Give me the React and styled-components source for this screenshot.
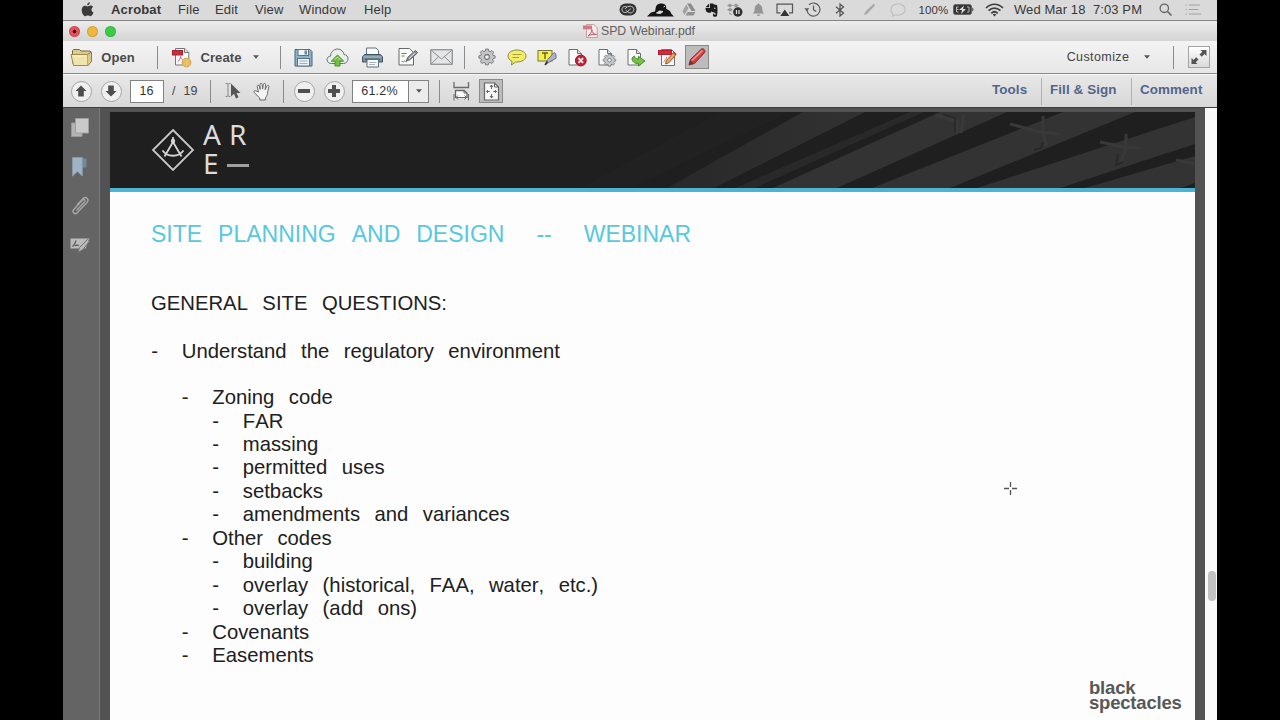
import React from 'react';
import styled, { createGlobalStyle, css } from 'styled-components';

const GlobalStyle = createGlobalStyle`
  * {
    box-sizing: border-box;
  }

  body {
    margin: 0;
    background: #000;
    font-family: 'Liberation Sans', Arial, sans-serif;
    overflow: hidden;
  }

  svg {
    display: block;
    flex: none;
    overflow: visible;
  }
`;

const menus = ['File', 'Edit', 'View', 'Window', 'Help'];

const outline = [
  { level: 0, text: 'Understand the regulatory environment', after: 22.8 },
  { level: 1, text: 'Zoning code' },
  { level: 2, text: 'FAR' },
  { level: 2, text: 'massing' },
  { level: 2, text: 'permitted uses' },
  { level: 2, text: 'setbacks' },
  { level: 2, text: 'amendments and variances' },
  { level: 1, text: 'Other codes' },
  { level: 2, text: 'building' },
  { level: 2, text: 'overlay (historical, FAA, water, etc.)' },
  { level: 2, text: 'overlay (add ons)' },
  { level: 1, text: 'Covenants' },
  { level: 1, text: 'Easements' },
];

const Icon = ({ w = 20, h = 20, children }) => (
  <svg width={w} height={h} viewBox={`0 0 ${w} ${h}`} fill="none">{children}</svg>
);

/* ---------- menu bar icons ---------- */

const AppleIcon = () => (
  <Icon w={13} h={15}>
    <path d="M8.8.3c.1 1.7-1.2 3-2.7 3C6 1.8 7.3.4 8.8.3zM6.5 4.4c.7 0 1.6-.8 3-.8 1 0 2 .5 2.6 1.4-2.3 1.4-1.9 4.6.4 5.5-.6 1.6-1.8 3.7-3.1 3.7-.9 0-1.3-.6-2.6-.6s-1.7.6-2.6.6C2.500 14.200.7 11 .7 8.100c0-2.900 1.700-4.400 3.300-4.400 1.100 0 1.900.7 2.500.7z" fill="#3a3a3a" />
  </Icon>
);

const CloudCreativeIcon = () => (
  <Icon w={18} h={13}>
    <rect x="0.5" y="0.5" width="17" height="12" rx="6" fill="#333" />
    <path d="M8 4.300C5.500 2.500 3 4 3 6.500S5.500 10.300 8 9l3.800-3.300M6 6c2.500-4 8.800-3.500 8.800.5 0 3-3.500 4.500-6 2.500L7 7.200" stroke="#ccc" strokeWidth="1" />
  </Icon>
);

const SkyIcon = () => (
  <Icon w={27} h={14}>
    <path d="M0 13.500 4 9.500l4-1 1-5C10 1 13 0 16 .8c3 .7 3.500 3 3.200 5L23 8l1.500 3 2.500 2.500z" fill="#151515" />
    <path d="M9.500 10 12.500 8l3.500.5-2.500 2zM16.500 4l1.500-.7" stroke="#ddd" fill="#ddd" />
  </Icon>
);

const DriveIcon = () => (
  <Icon w={14} h={13}>
    <path d="M5 .5h4L13.500 8h-4z" fill="#8c8c8c" />
    <path d="M4.300 1.500.5 8.200l2 3.800 4-7z" fill="#a1a1a1" />
    <path d="M5.500 9h8l-2 3.500H3.500z" fill="#929292" />
  </Icon>
);

const EvernoteIcon = () => (
  <Icon w={13} h={14}>
    <path d="M.5 4.200 4.200.500V4.200zM5 .5h3l1 1 3 .4c.7 3 .7 7 0 11-.4 1-3.700 1-4 0-.2-1.600 0-2.400 1.300-2.400v1.200h1.300c.2-1.200-.3-2.200-1.600-2.300C7.500 9.300 7 8.700 6.700 8c-.3 1.500-1.200 2-2.700 1.800C1 9.500.5 7 .5 5H5z" fill="#1d1d1d" />
    <circle cx="9.800" cy="5.300" r="0.800" fill="#ccc" />
  </Icon>
);

const DropboxIcon = () => (
  <Icon w={17} h={14}>
    <path d="m4 .5 3 2-3 2-3-2zM10 .5l3 2-3 2-3-2zM4 4.800l3 2-3 2-3-2zM3 9.500l3 1.500v1L3 11z" fill="#999" />
    <circle cx="11.800" cy="9" r="4.700" fill="#2e2e2e" />
    <path d="M10.500 7v4M13 7v4" stroke="#ddd" strokeWidth="1.300" />
  </Icon>
);

const BellIcon = () => (
  <Icon w={13} h={14}>
    <path d="M6.500.5c.8 0 1 .5 1 1C9.500 2 10.300 4 10.300 6c0 2.500.8 3.600 2.200 4.500H.5C1.900 9.600 2.700 8.500 2.700 6c0-2 .8-4 2.800-4.500 0-.5.200-1 1-1zM5 11.500h3c0 2-3 2-3 0z" fill="#949494" />
  </Icon>
);

const AirplayIcon = () => (
  <Icon w={18} h={14}>
    <path d="M4.500 9.800H1V1.200h15.500v8.600H13" stroke="#555" strokeWidth="1.200" />
    <path d="M8.800 6.500 13.300 13H4.300z" fill="#333" />
  </Icon>
);

const TimeMachineIcon = () => (
  <Icon w={17} h={15}>
    <path d="M3 8A6.500 6.500 0 1 0 5 2.800" stroke="#5c5c5c" strokeWidth="1.200" />
    <path d="M.3 6.300h5L2.800 9.300z" fill="#5c5c5c" />
    <path d="M9.500 3.500v4.300l2.800 1.700" stroke="#5c5c5c" strokeWidth="1.200" />
  </Icon>
);

const BluetoothIcon = () => (
  <Icon w={10} h={14}>
    <path d="m1 3.800 7.500 6.200L5 13V1l3.500 3L1 10.200" stroke="#505050" strokeWidth="1.200" />
  </Icon>
);

const FadedPenIcon = () => (
  <Icon w={13} h={13}>
    <path d="m1 12 1-3L10.500.8l1.700 1.500L4 11z" fill="#a9a9a9" />
  </Icon>
);

const FadedBubbleIcon = () => (
  <Icon w={16} h={14}>
    <path d="M8 .8c4 0 7.200 2.500 7.200 5.700S12 12.200 8 12.200c-1 0-2-.1-2.700-.4L2.500 13l.3-2.500C1.500 9.500.8 8.100.8 6.500.800 3.300 4 .8 8 .8z" stroke="#bdbdbd" strokeWidth="1.100" />
  </Icon>
);

const BatteryIcon = () => (
  <Icon w={21} h={11}>
    <rect x="0.700" y="0.700" width="17.600" height="9.600" rx="1.500" fill="#333" stroke="#555" />
    <path d="M19.300 3.500c1.500.500 1.500 3.500 0 4z" fill="#333" />
    <path d="M5.500 3h-2v5h2M3.500 5.500h2M14 3h2v5h-2" stroke="#bbb" strokeWidth="1" />
    <path d="M11 1.500 6 6h3l-1 4L13 5h-3z" fill="#ddd" />
  </Icon>
);

const WifiIcon = () => (
  <Icon w={19} h={14}>
    <path d="M1 5c5-5 12-5 17 0M3.600 7.700c3.500-3.500 8.300-3.500 11.800 0M6.300 10.300c2-2 4.400-2 6.400 0" stroke="#3f3f3f" strokeWidth="1.700" />
    <path d="m7.700 11.600 1.800 2 1.800-2c-1-1-2.600-1-3.600 0z" fill="#3f3f3f" />
  </Icon>
);

const SearchIcon = () => (
  <Icon w={13} h={13}>
    <circle cx="5.300" cy="5.300" r="4.200" stroke="#666" strokeWidth="1.300" />
    <path d="m8.500 8.500 4 4" stroke="#666" strokeWidth="1.700" />
  </Icon>
);

const ListIcon = () => (
  <Icon w={17} h={11}>
    <path d="M3.800 1h11M3.800 5.500h9.500M3.800 10h12.500M.5 1h1.300M.5 5.500h1.300M.5 10h1.300" stroke="#a2a2a2" strokeWidth="1.200" />
  </Icon>
);

/* ---------- toolbar icons ---------- */

const PdfMark = () => (
  <Icon w={15} h={14}>
    <path d="M3.500.5h7.300l3.500 3.300v9.700H3.500z" fill="#f5e9e9" stroke="#c4a1a1" />
    <rect x="0" y="1.500" width="9" height="3.800" fill="#cf7886" />
    <path d="M5 12c2-1.500 3.800-4 3.800-6.500.3 3 2 5 4.700 5-3-.5-6 0-8.500 1.500z" stroke="#b95866" strokeWidth="1" />
  </Icon>
);

const FolderIcon = () => (
  <Icon w={23} h={19}>
    <path d="M2.500 15V2.500l1-1h6l1.500 1.500h9l1 1V13l-3 3z" fill="#dccb8e" stroke="#796b40" />
    <path d="M1 6.500h16.500l.5 11H3.500z" fill="#f0e3ad" stroke="#a18a4a" strokeLinejoin="round" />
    <path d="m17.500 6.500 4-2.500v9.500l-3.500 4" fill="#dcc88a" stroke="#8f7b43" />
    <path d="M3 8h13" stroke="#fdf5ca" />
  </Icon>
);

const CreateIcon = () => (
  <Icon w={20} h={21}>
    <path d="M3.500 1.500h9.300l4 4V18H3.500z" fill="#fafafa" stroke="#777" />
    <path d="M12.500 1.500v4h4" fill="#ddd" stroke="#777" />
    <rect x="0.500" y="3.500" width="10" height="4.500" fill="#c92e3d" stroke="#a92232" />
    <path d="M5.500 15c2-1.500 3-4 3-5.500.500 2 1.500 3 3 3.500" stroke="#cc6570" />
    <circle cx="14.500" cy="15.500" r="4.400" fill="#e6b95d" stroke="#d3a34a" />
    <path d="m11 13 7 5M18 13l-7 5M14.500 11v9" stroke="#edcc84" strokeWidth="0.700" />
  </Icon>
);

const SaveIcon = () => (
  <Icon w={19} h={19}>
    <path d="M1 1.500h15l2 2V18H1z" fill="#8fb1c8" stroke="#4a6778" strokeLinejoin="round" />
    <rect x="4" y="1.500" width="10.500" height="6" fill="#f2f5f7" stroke="#587487" />
    <rect x="10.500" y="2.500" width="2.500" height="4" fill="#6688a0" />
    <rect x="3.500" y="10.500" width="12" height="7.500" fill="#edf2f5" stroke="#587487" />
    <path d="M5.500 13h8M5.500 15.500h8" stroke="#9ab0be" />
  </Icon>
);

const CloudUpIcon = () => (
  <Icon w={23} h={19}>
    <path d="M5.500 15.500C2.500 15.500 1 13.700 1 11.700c0-2.200 1.700-3.500 3.500-3.500C4.500 4.500 7.500 1 11.500 1c3.500 0 6 2.300 6.500 5.500 2.500.2 4 2 4 4.300 0 2.700-2 4.700-4.500 4.700z" fill="#eaeeec" stroke="#65756c" />
    <path d="m11.500 7 6.200 6.200H14V18H9v-4.800H5.300z" fill="#75c044" stroke="#4b8f29" strokeLinejoin="round" />
    <path d="m8.500 12 3-3 3 3" stroke="#c0e69c" />
  </Icon>
);

const PrintIcon = () => (
  <Icon w={21} h={21}>
    <path d="M4.500 9V1h9.500l2.500 2.500V9" fill="#fafafa" stroke="#60717b" />
    <path d="M2.500 7.500h16l2 2.500v5h-20v-5z" fill="#7891a3" stroke="#3e515e" />
    <path d="M1.500 10h18" stroke="#b0c4d2" />
    <path d="M3.500 12.500h14" stroke="#29343c" strokeWidth="1.500" />
    <path d="M5 12.500h11.500V20H5z" fill="#f7f9fa" stroke="#60717b" />
    <path d="M7 15.500h7.500M7 17.500h6" stroke="#a7b4bd" />
  </Icon>
);

const SignIcon = () => (
  <Icon w={20} h={20}>
    <path d="M1 1.500h10.500l4 4V18H1z" fill="#fafafa" stroke="#686868" />
    <path d="M3.500 6.500h5M3.500 9h3M3.500 15c1-2 1.500 1 2.500-.5s1.500.7 3 .3" stroke="#777" />
    <path d="m8.500 14 1-3.500 8-7 2 2.300-7.700 7z" fill="#8d949a" stroke="#5b6267" />
    <path d="m11 11.500 6-5.500" stroke="#e2e2e2" />
  </Icon>
);

const MailIcon = () => (
  <Icon w={23} h={16}>
    <rect x="0.800" y="0.800" width="21.400" height="14.400" fill="#e4e5e6" stroke="#747678" />
    <path d="m1.500 1.500 10 8.500 10-8.500M1.500 14.500l7-6.800M21.500 14.500l-7-6.800" stroke="#8a8c8e" />
  </Icon>
);

const GearShape = ({ cx, cy, s = 1 }) => (
  <g transform={`translate(${cx} ${cy}) scale(${s})`}>
    <path
      d="M-1.500-8h3l.5 2.200 1.500.7 2-1.300 2.100 2.100-1.300 2 .7 1.500 2.200.5v2.600l-2.200.5-.7 1.500 1.300 2-2.100 2.100-2-1.300-1.500.7-.5 2.200h-3l-.5-2.200-1.500-.7-2 1.300-2.100-2.100 1.300-2-.7-1.500-2.200-.5v-2.600l2.200-.5.7-1.500-1.300-2 2.100-2.100 2 1.300 1.500-.7z"
      fill="#c3c6c8"
      stroke="#6a6f73"
    />
    <circle cy="1" r="2.700" fill="#f1f1f1" stroke="#6a6f73" strokeWidth="1.200" />
  </g>
);

const GearIcon = () => (
  <Icon w={18} h={18}><GearShape cx={9} cy={8.100} s={0.880} /></Icon>
);

const CommentIcon = () => (
  <Icon w={20} h={17}>
    <path d="M10 1c5 0 9 2.500 9 6s-4 6-9 6l-1.300-.1L4.500 16l.5-3.800C2.500 11 1 9.300 1 7c0-3.500 4-6 9-6z" fill="#f3ee66" stroke="#8b8842" />
    <path d="M5.500 5.500h9M5.500 8.500h6.500" stroke="#a6a24a" />
  </Icon>
);

const HighlightIcon = () => (
  <Icon w={20} h={17}>
    <rect x="1" y="1.500" width="14" height="10.500" fill="#f6f04f" stroke="#777442" />
    <path d="M5 4h6M8 4v6" stroke="#67641c" strokeWidth="1.400" />
    <path d="m8.500 15.500 1.500-4L17 3.500l2 1.800v4L12.500 13z" fill="#aeb4c4" stroke="#6a7081" />
    <path d="m8 16 2.500-3.500" stroke="#333" strokeWidth="1.500" />
  </Icon>
);

const Page = () => (
  <>
    <path d="M1 1.500h8.500l4 4V17H1z" fill="#fafafa" stroke="#6c7074" />
    <path d="M9.500 1.500v4h4" fill="#ddd" stroke="#6c7074" />
  </>
);

const PageDeleteIcon = () => (
  <Icon w={19} h={19}>
    <Page />
    <circle cx="12.800" cy="12.500" r="5.400" fill="#c72134" stroke="#9d1428" />
    <path d="m10.500 10.200 4.600 4.600M15.100 10.200l-4.600 4.600" stroke="#fff" strokeWidth="1.700" />
  </Icon>
);

const PageGearIcon = () => (
  <Icon w={19} h={19}>
    <Page />
    <GearShape cx={11.500} cy={11.500} s={0.680} />
  </Icon>
);

const PageExportIcon = () => (
  <Icon w={20} h={19}>
    <Page />
    <path d="M5 10c0 4 2.500 5.500 6.500 5.500V18l6.500-5-6.500-4.700V11C9 11 7.500 10 7.500 8z" fill="#78bf48" stroke="#478b29" strokeLinejoin="round" />
  </Icon>
);

const PdfEditIcon = () => (
  <Icon w={19} h={19}>
    <path d="M3.500 1.500h10l3 3V17.500h-13z" fill="#fafafa" stroke="#727272" />
    <rect x="0.500" y="2.500" width="13" height="4" fill="#d12d3a" stroke="#b62032" />
    <path d="M5.500 14c1.500-1 3-3 3-5" stroke="#cc6570" />
    <path d="m7.500 16 1-3.500 7-8 2.500 2-6.800 8z" fill="#eaa65d" stroke="#8e5c34" />
    <path d="m15.500 4.500 2.500 2" stroke="#cc3a3f" strokeWidth="1.800" />
  </Icon>
);

const RedPencilIcon = () => (
  <Icon w={20} h={20}>
    <path d="m2 18 1.500-5.500L14.500 2c1.500-1 4.500 1.200 3.200 3.400L7.500 16.500z" fill="#d93d3d" stroke="#8d2930" />
    <path d="M5 13.500 15.500 3.500" stroke="#f19b95" strokeWidth="1.500" />
    <path d="m2 18 1.300-4.500 3.200 2.800z" fill="#693338" />
  </Icon>
);

const ExpandIcon = () => (
  <Icon w={16} h={16}>
    <path d="M9.500 1h6v6l-2-2-2.700 2.700L8.500 5.500 11.300 2.800zM6.500 15h-6V9l2 2 2.700-2.700 2.300 2.200-2.800 2.700z" fill="#555" />
  </Icon>
);

const Caret = () => (
  <Icon w={6} h={4}><path d="M0 .3h6L3 3.800z" fill="#555" /></Icon>
);

const ArrowShape = ({ down }) => (
  <Icon w={12} h={12}>
    <path d="M6 .5 11.500 6H8.800v5.500H3.200V6H.5z" fill="#4e4e4e" transform={down ? 'rotate(180 6 6)' : undefined} />
  </Icon>
);

const SelectIcon = () => (
  <Icon w={17} h={18}>
    <path d="M.5 1.500h1.800l.7.800.7-.8h1.800M3 2v12M.5 14.500h1.800l.7-.8.7.8h1.800" stroke="#888" />
    <path d="M6 1.500v13l3-2.700 2 4.700 2.500-1.200-2-4.400h4z" fill="#555" />
  </Icon>
);

const HandIcon = () => (
  <Icon w={18} h={19}>
    <path
      d="M5.500 10 4.300 4.700c-.4-1.700 1.500-2.200 2-.6l.9 3.300L7 2.600C7 .9 9 .9 9.200 2.500l.4 4.600.8-4.700c.3-1.600 2.200-1.300 2.100.3l-.3 5 1.700-3.600c.7-1.400 2.400-.7 2 .8-.8 3-1.200 4.500-1.400 6.400-.2 2-1 3.200-2 4.500V18H6.800v-2c-2-1.500-3.200-3.700-5.500-5.300-1.200-1 0-2.600 1.500-1.900z"
      fill="#f4f4f4"
      stroke="#6b6b6b"
      strokeLinejoin="round"
    />
  </Icon>
);

const FitWidthIcon = () => (
  <Icon w={17} h={19}>
    <path d="M1 0v5.500h14.500V0" stroke="#6a6a6a" strokeWidth="1.300" />
    <path d="M2.500 16V8.500h8.500l3 2.500v5" fill="#fafafa" stroke="#666" strokeWidth="1.300" />
    <path d="M11 8.500V11h3M1 12v6.500M15.500 12v6.500M3 15.500h10.500M5 13.500l-2 2 2 2M11.500 13.500l2 2-2 2" stroke="#666" />
  </Icon>
);

const FitPageIcon = () => (
  <Icon w={17} h={19}>
    <path d="M1.500 1h10L15.500 5v13h-14z" fill="#f7f7f7" stroke="#666" strokeWidth="1.200" />
    <path d="M11.500 1v4h4" stroke="#666" />
    <path d="M8.500 3v4M8.500 12v4M3.500 9.500h3.300M10.300 9.500h3.300M7 5l1.500-2L10 5M7 14l1.500 2 1.500-2M5 8 3.500 9.500 5 11M12 8l1.500 1.500L12 11" stroke="#666" />
  </Icon>
);

/* ---------- side panel icons ---------- */

const PagesIcon = () => (
  <Icon w={18} h={19}>
    <path d="M.5 5H11v13.500H.5z" fill="#b4b4b4" stroke="#999" />
    <path d="M4.500.5h13v14.500h-13z" fill="#cacaca" stroke="#a0a0a0" />
  </Icon>
);

const BookmarkIcon = () => (
  <Icon w={15} h={20}>
    <path d="M9 1.500h5.500v9H9z" fill="#71899c" />
    <path d="M.5.500h9.800V19L5.500 14.500.5 19z" fill="#a0b4c4" stroke="#8499aa" />
  </Icon>
);

const ClipIcon = () => (
  <Icon w={18} h={20}>
    <path d="m5.500 14.500 8-8.500c1.500-1.700-.5-3.500-2-2L2.800 13.500c-2.300 2.700 1 5.600 3.400 3.200L16 6.500c2.800-3.200-1-6.800-4-3.800L6 9" stroke="#a9a9a9" strokeWidth="1.300" />
  </Icon>
);

const SignaturesIcon = () => (
  <Icon w={20} h={16}>
    <path d="M.5 1.500h19l-4 10H.5z" fill="#bcbcbc" />
    <path d="M2.500 9.500c2-1 3-4.500 3.500-6M5 9c2-2 2 0 4-1" stroke="#555" strokeWidth="1.200" />
    <path d="m8 15.500 1.500-5 8-8 2 1.500-6.500 8.500z" fill="#b9b9b9" stroke="#707070" />
  </Icon>
);

/* ---------- slide drawings ---------- */

const CompassLogo = () => (
  <Icon w={42} h={42}>
    <path d="M21 1 41 21 21 41 1 21z" stroke="#c8c8c8" strokeWidth="1.800" />
    <path d="M21 8v5M21 13 12.500 27.500M21 13l8.500 14.500" stroke="#d5d5d5" strokeWidth="1.800" />
    <path d="M10.500 21.500c5 7 16 7 21 0" stroke="#d5d5d5" strokeWidth="1.800" />
    <circle cx="21" cy="12" r="2.200" fill="#d5d5d5" />
  </Icon>
);

const Beams = styled.svg`
  grid-area: 1 / 1;
`;

const HeaderArt = () => (
  <Beams width="1085" height="76" viewBox="0 0 1085 76" fill="none">
    <defs>
      <linearGradient id="fade" x1="500" x2="760" gradientUnits="userSpaceOnUse">
        <stop offset="0" stopColor="#262626" />
        <stop offset="1" stopColor="#323232" />
      </linearGradient>
    </defs>
    <path d="M470 76 610 0h70L520 76z" fill="#212121" />
    <path d="M557 76 693 0h62L604 76z" fill="url(#fade)" />
    <path d="M625 76 800 0h14L645 76z" fill="#292929" />
    <path d="M663 76 830 0h67L727 76z" fill="#333" />
    <path d="M762 76 953 0h72L840 76z" fill="#333" />
    <path d="M867 76 1085 5v27L950 76z" fill="#333" />
    <path d="M975 76 1085 44v27l-15 5z" fill="#333" />
    <g stroke="#393939" strokeWidth="3">
      <path d="M825 3l22 6v12M854 3l-3 18" />
      <path d="M900 12l30 8 20 2M933 4v18l4 12" />
      <path d="M990 30l24 5 16 1M1016 22v14l-6 16" />
      <path d="M1066 48l19 4" />
    </g>
    <g stroke="#292929" strokeWidth="2">
      <path d="M833 2l12 4v14M933 30l-2 6-7 2M1008 42l-2 11 7-3" />
    </g>
  </Beams>
);

const Crosshair = () => (
  <Icon w={13} h={13}>
    <path d="M6.500 0v5M6.500 8v5M0 6.500h5M8 6.500h5" stroke="#555" strokeWidth="1.300" />
  </Icon>
);

const App = () => {
  return (
    <Screen>
      <GlobalStyle />
      <MenuBar>
        <Slot $w={24} $before={12}><AppleIcon /></Slot>
        <MenuNames>
          <b>Acrobat</b>
          {menus.map(name => <span key={name}>{name}</span>)}
        </MenuNames>
        <Push />
        <Slot $w={24}><CloudCreativeIcon /></Slot>
        <Slot $w={40}><SkyIcon /></Slot>
        <Slot $w={18}><DriveIcon /></Slot>
        <Slot $w={26}><EvernoteIcon /></Slot>
        <Slot $w={20}><DropboxIcon /></Slot>
        <Slot $w={28}><BellIcon /></Slot>
        <Slot $w={26}><AirplayIcon /></Slot>
        <Slot $w={28}><TimeMachineIcon /></Slot>
        <Slot $w={28}><BluetoothIcon /></Slot>
        <Slot $w={30}><FadedPenIcon /></Slot>
        <Slot $w={28}><FadedBubbleIcon /></Slot>
        <Slot $w={39} $before={2}><Percent>100%</Percent></Slot>
        <Slot $w={21}><BatteryIcon /></Slot>
        <Slot $w={40}><WifiIcon /></Slot>
        <Slot $w={128}><Clock>Wed Mar 18{'  '}7:03 PM</Clock></Slot>
        <Slot $w={34} $before={6}><SearchIcon /></Slot>
        <Slot $w={22}><ListIcon /></Slot>
      </MenuBar>

      <TitleBar>
        <Lights>
          <Light $color="#e2555b" $edited />
          <Light $color="#efb73c" />
          <Light $color="#3ccb45" />
        </Lights>
        <FileName>
          <PdfMark />
          SPD Webinar.pdf
        </FileName>
      </TitleBar>

      <FileBar>
        <Slot $w={24} $before={6}><FolderIcon /></Slot>
        <Slot $w={34} $before={8}><ToolLabel>Open</ToolLabel></Slot>
        <Rule $before={22} />
        <Slot $w={20} $before={14}><CreateIcon /></Slot>
        <Slot $w={44} $before={7}><ToolLabel>Create</ToolLabel></Slot>
        <Slot $w={26}><Caret /></Slot>
        <Rule $before={11} />
        <Slot $w={34} $before={5}><SaveIcon /></Slot>
        <Slot $w={35}><CloudUpIcon /></Slot>
        <Slot $w={35}><PrintIcon /></Slot>
        <Slot $w={35}><SignIcon /></Slot>
        <Slot $w={32}><MailIcon /></Slot>
        <Rule $before={7} />
        <Slot $w={30} $before={7}><GearIcon /></Slot>
        <Slot $w={30}><CommentIcon /></Slot>
        <Slot $w={30}><HighlightIcon /></Slot>
        <Slot $w={30}><PageDeleteIcon /></Slot>
        <Slot $w={30}><PageGearIcon /></Slot>
        <Slot $w={30}><PageExportIcon /></Slot>
        <Slot $w={30}><PdfEditIcon /></Slot>
        <Slot $w={30}><Pressed><RedPencilIcon /></Pressed></Slot>
        <Push />
        <Slot $w={64}><Customize>Customize</Customize></Slot>
        <Slot $w={34}><Caret /></Slot>
        <Rule $before={9} />
        <Slot $w={22} $before={14} $after={7}><ExpandButton><ExpandIcon /></ExpandButton></Slot>
      </FileBar>

      <PageBar>
        <Slot $w={30} $before={3}><Round><ArrowShape /></Round></Slot>
        <Slot $w={30}><Round><ArrowShape down /></Round></Slot>
        <PageInput>16</PageInput>
        <PageTotal><span>/</span><span>19</span></PageTotal>
        <Rule $before={10} />
        <Slot $w={28} $before={8}><SelectIcon /></Slot>
        <Slot $w={30}><HandIcon /></Slot>
        <Rule $before={6} />
        <Slot $w={30} $before={5}><Round><Bar /></Round></Slot>
        <Slot $w={30}><Round><Plus /></Round></Slot>
        <Zoom>
          <span>61.2%</span>
          <i><Caret /></i>
        </Zoom>
        <Rule $before={9} />
        <Slot $w={30} $before={6}><FitWidthIcon /></Slot>
        <Slot $w={30}><Pressed><FitPageIcon /></Pressed></Slot>
        <Push />
        <PaneTab $w={49}>Tools</PaneTab>
        <PaneTab $w={90} $ruled>Fill &amp; Sign</PaneTab>
        <PaneTab $w={86} $ruled>Comment</PaneTab>
      </PageBar>

      <Workspace>
        <SidePanel>
          <SideItem><PagesIcon /></SideItem>
          <SideItem><BookmarkIcon /></SideItem>
          <SideItem><ClipIcon /></SideItem>
          <SideItem><SignaturesIcon /></SideItem>
        </SidePanel>
        <Slide>
          <SlideHeader>
            <HeaderArt />
            <Brand>
              <CompassLogo />
              <BrandLetters>
                <span>A</span>
                <span>R</span>
                <span>E</span>
                <Dash />
              </BrandLetters>
            </Brand>
          </SlideHeader>
          <SlideTitle>SITE PLANNING AND DESIGN{'  '}--{'  '}WEBINAR</SlideTitle>
          <Question>GENERAL SITE QUESTIONS:</Question>
          <Outline>
            {outline.map(item => (
              <OutlineItem key={item.text} $level={item.level} $after={item.after}>
                <span>-</span>
                {item.text}
              </OutlineItem>
            ))}
          </Outline>
          <Spectacles>
            <span>black</span>
            <span>spectacles</span>
          </Spectacles>
        </Slide>
        <ScrollTrack>
          <ScrollThumb />
        </ScrollTrack>
      </Workspace>
      <Pointer><Crosshair /></Pointer>
    </Screen>
  );
}

const Screen = styled.div`
  position: relative;
  width: 1154px;
  height: 720px;
  margin-left: 63px;
  display: flex;
  flex-direction: column;
  overflow: hidden;
  background: #e4e4e4;
`;

const Slot = styled.div`
  width: ${p => p.$w}px;
  flex: none;
  margin-left: ${p => p.$before || 0}px;
  margin-right: ${p => p.$after || 0}px;
  display: flex;
  align-items: center;
  justify-content: center;
  white-space: pre;
`;

const Push = styled.div`
  flex: 1;
`;

const MenuBar = styled.div`
  height: 21px;
  flex: none;
  display: flex;
  align-items: center;
  padding: 0 13px 1px 0;
  background: #dadada;
  border-bottom: 1px solid #858585;
  color: #383838;
`;

const MenuNames = styled.div`
  display: grid;
  grid-template-columns: 67px 37px 40px 44px 65px 40px;
  margin-left: 12px;
  font-size: 13px;
  letter-spacing: 0.15px;
  line-height: 19px;
`;

const Percent = styled.span`
  font-size: 11.5px;
  letter-spacing: 0.1px;
`;

const Clock = styled.span`
  font-size: 13px;
  letter-spacing: 0.1px;
`;

const TitleBar = styled.div`
  height: 20px;
  flex: none;
  display: grid;
  grid-template-columns: 1fr auto 1fr;
  align-items: center;
  background: linear-gradient(#ececec, #d4d4d4);
`;

const Lights = styled.div`
  display: flex;
  gap: 7px;
  padding-left: 6px;
`;

const Light = styled.span`
  width: 11px;
  height: 11px;
  border-radius: 50%;
  background: ${p => p.$color};
  border: 1px solid rgba(0, 0, 0, 0.12);

  ${p => p.$edited && css`
    background: radial-gradient(circle, #5d0d12 0 1.5px, ${p.$color} 2.2px);
  `}
`;

const FileName = styled.div`
  display: flex;
  align-items: center;
  gap: 3px;
  padding-right: 2px;
  font-size: 12.3px;
  color: #606060;
`;

const FileBar = styled.div`
  height: 33px;
  flex: none;
  display: flex;
  align-items: center;
  background: linear-gradient(#f4f4f4, #e6e6e6);
  border-bottom: 1px solid #8a8a8a;
`;

const PageBar = styled.div`
  height: 33px;
  flex: none;
  display: flex;
  align-items: center;
  background: linear-gradient(#e7e7e7, #d8d8d8);
  border-top: 1px solid #f5f5f5;
`;

const Rule = styled.div`
  width: 1px;
  height: 23px;
  flex: none;
  margin-left: ${p => p.$before}px;
  background: #8b8b8b;
`;

const ToolLabel = styled.span`
  font-size: 13px;
  font-weight: bold;
  letter-spacing: 0.1px;
  color: #4a4a4a;
`;

const Customize = styled.span`
  font-size: 12.5px;
  letter-spacing: 0.4px;
  color: #444;
`;

const Pressed = styled.div`
  width: 24px;
  height: 24px;
  display: flex;
  align-items: center;
  justify-content: center;
  background: #bcbcbc;
  border: 1px solid #8a8a8a;
`;

const ExpandButton = styled.div`
  width: 22px;
  height: 22px;
  display: flex;
  align-items: center;
  justify-content: center;
  background: linear-gradient(#fff, #d9d9d9);
  border: 1px solid #a4a4a4;
`;

const Round = styled.div`
  width: 21px;
  height: 21px;
  display: grid;
  place-items: center;
  border-radius: 50%;
  background: #f0f0f0;
  border: 1px solid #a3a3a3;
`;

const Bar = styled.span`
  width: 12px;
  height: 4px;
  background: #505050;
`;

const Plus = styled.span`
  width: 12px;
  height: 12px;
  background:
    linear-gradient(#505050, #505050) center / 12px 4px no-repeat,
    linear-gradient(#505050, #505050) center / 4px 12px no-repeat;
`;

const PageInput = styled.div`
  width: 34px;
  height: 23px;
  margin-left: 4px;
  padding-right: 1px;
  border: 1px solid #828282;
  background: #fff;
  font-size: 12.5px;
  line-height: 21px;
  text-align: center;
  color: #333;
`;

const PageTotal = styled.div`
  width: 28px;
  display: flex;
  gap: 8px;
  margin-left: 8px;
  font-size: 12.5px;
  color: #444;
`;

const Zoom = styled.div`
  width: 77px;
  height: 23px;
  display: flex;
  margin: 0 1px 0 3px;
  border: 1px solid #828282;
  background: #fff;
  font-size: 12.5px;
  line-height: 21px;
  color: #333;

  span {
    flex: 1;
    padding-right: 2px;
    text-align: center;
    letter-spacing: 0.2px;
  }

  i {
    width: 20px;
    display: grid;
    place-items: center;
    border-left: 1px solid #828282;
    background: #ececec;
  }
`;

const PaneTab = styled.div`
  width: ${p => p.$w}px;
  height: 27px;
  flex: none;
  padding-left: ${p => (p.$ruled ? 8 : 0)}px;
  font-size: 13.4px;
  font-weight: bold;
  line-height: 24px;
  letter-spacing: 0.1px;
  color: #51658d;
  border-left: ${p => (p.$ruled ? '1px solid #b0b0b0' : 'none')};
`;

const Workspace = styled.div`
  flex: 1;
  display: flex;
  border-top: 1px solid #3e3e3e;
  background: #525252;
`;

const SidePanel = styled.div`
  width: 37px;
  padding-bottom: 4px;
  background: #646464;
  border-right: 1px solid #7c7c7c;
`;

const SideItem = styled.div`
  height: 39px;
  display: flex;
  align-items: center;
  justify-content: center;
  padding-right: 3px;
`;

const Slide = styled.div`
  width: 1085px;
  margin: 4px 10px 0;
  display: flex;
  flex-direction: column;
  background: #fdfdfd;
  color: #202020;
  font-kerning: none;
`;

const SlideHeader = styled.div`
  height: 80px;
  flex: none;
  display: grid;
  background: #1f1f1f;
  border-bottom: 4px solid #4bb4d2;
`;

const Brand = styled.div`
  grid-area: 1 / 1;
  display: flex;
  align-items: center;
  padding-left: 42px;
`;

const BrandLetters = styled.div`
  display: grid;
  grid-template-columns: 26px 22px;
  grid-template-rows: 28.5px 28.5px;
  align-items: center;
  margin: 0 0 3px 9px;
  font-family: 'Noto Sans', sans-serif;
  font-size: 28px;
  line-height: 28px;
  color: #dcdcdc;
`;

const Dash = styled.i`
  width: 22px;
  height: 3px;
  margin-left: -2px;
  margin-top: 6px;
  background: #a0a0a0;
`;

const SlideTitle = styled.h1`
  margin: 28px 0 0 41px;
  font-size: 23px;
  font-weight: normal;
  line-height: 28px;
  word-spacing: 9.6px;
  white-space: pre;
  color: #58c8de;
`;

const Question = styled.h2`
  margin: 44.1px 0 24.3px 41px;
  font-size: 20.3px;
  font-weight: normal;
  line-height: 23.45px;
  word-spacing: 8.8px;
`;

const Outline = styled.ul`
  margin: 0;
  padding: 0 0 0 41.3px;
  list-style: none;
`;

const OutlineItem = styled.li`
  display: flex;
  padding-left: ${p => p.$level * 30.5}px;
  margin-bottom: ${p => p.$after || 0}px;
  font-size: 20.3px;
  line-height: 23.45px;
  word-spacing: 8.8px;
  white-space: pre;

  span {
    width: 30.5px;
  }
`;

const Spectacles = styled.div`
  display: flex;
  flex-direction: column;
  margin: auto 0 10px 979px;
  font-size: 18.5px;
  font-weight: bold;
  line-height: 15px;
  letter-spacing: -0.2px;
  color: #585858;
`;

const ScrollTrack = styled.div`
  width: 12px;
  padding: 463px 1px 0 3px;
  background: #f9f9f9;
`;

const ScrollThumb = styled.div`
  height: 30px;
  border-radius: 4px;
  background: #c1c1c1;
`;

// floats above the page
const Pointer = styled.div`
  position: absolute;
  left: 941px;
  top: 482px;
`;

export default App;
